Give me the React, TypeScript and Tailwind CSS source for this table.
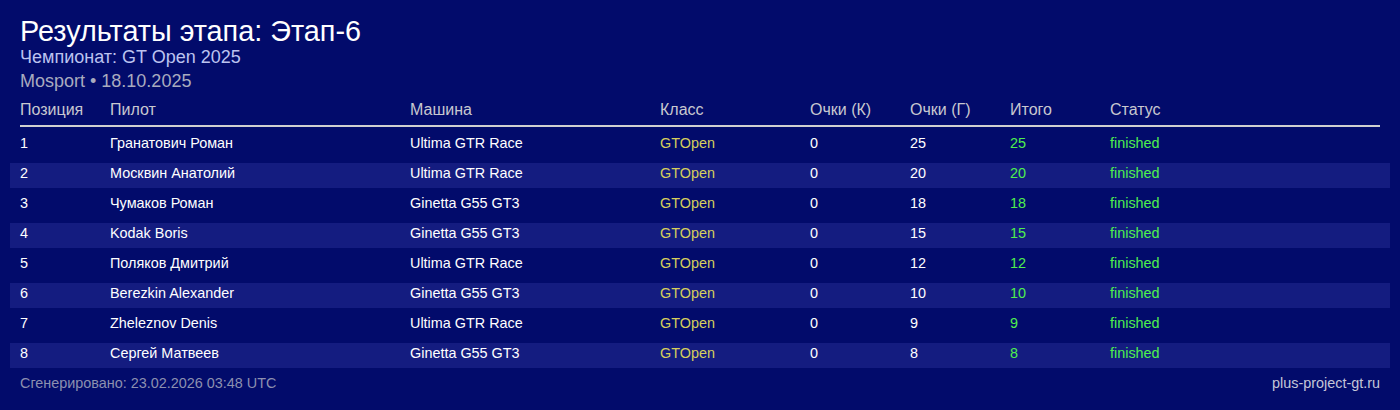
const ROWS = [
  { pos: 1, driver: 'Гранатович Роман', car: 'Ultima GTR Race', k: 0, g: 25, total: 25 },
  { pos: 2, driver: 'Москвин Анатолий', car: 'Ultima GTR Race', k: 0, g: 20, total: 20 },
  { pos: 3, driver: 'Чумаков Роман', car: 'Ginetta G55 GT3', k: 0, g: 18, total: 18 },
  { pos: 4, driver: 'Kodak Boris', car: 'Ginetta G55 GT3', k: 0, g: 15, total: 15 },
  { pos: 5, driver: 'Поляков Дмитрий', car: 'Ultima GTR Race', k: 0, g: 12, total: 12 },
  { pos: 6, driver: 'Berezkin Alexander', car: 'Ginetta G55 GT3', k: 0, g: 10, total: 10 },
  { pos: 7, driver: 'Zheleznov Denis', car: 'Ultima GTR Race', k: 0, g: 9, total: 9 },
  { pos: 8, driver: 'Сергей Матвеев', car: 'Ginetta G55 GT3', k: 0, g: 8, total: 8 },
];

// fixed column widths, last column takes the rest
const COLS = ['w-[90px]', 'w-[300px]', 'w-[250px]', 'w-[150px]', 'w-[100px]', 'w-[100px]', 'w-[100px]', 'flex-1'];
const HEADERS = ['Позиция', 'Пилот', 'Машина', 'Класс', 'Очки (К)', 'Очки (Г)', 'Итого', 'Статус'];

export default function App() {
  return (
    <div
      className="min-h-screen bg-[#020b6b] px-[10px] pt-[16px] text-white"
      style={{ fontFamily: '"Liberation Sans", Arial, sans-serif' }}
    >
      <div className="px-[10px]">
        <h1 className="text-[28.8px] leading-[30px]">Результаты этапа: Этап-6</h1>
        <div className="mt-[1px] text-[18px] leading-[20px] text-[#bcc3f0]">Чемпионат: GT Open 2025</div>
        <div className="mt-[4px] text-[18px] leading-[20px] text-[#a9abbf]">Mosport • 18.10.2025</div>
      </div>

      {/* Table header */}
      <div className="mx-[10px] mt-[9px] flex border-b-2 border-[#d0d0d0] pb-[5px] text-[16px] leading-[20px] text-[#c8c8d0]">
        {HEADERS.map((h, i) => (
          <div key={h} className={COLS[i]}>{h}</div>
        ))}
      </div>

      <div className="pt-[1px]">
        {ROWS.map((r, idx) => (
          <div
            key={r.pos}
            className={`mt-[5px] flex h-[25px] px-[10px] pt-[2px] text-[14.4px] leading-[16px] ${idx % 2 === 1 ? 'bg-[#141c80]' : ''}`}
          >
            <div className={COLS[0]}>{r.pos}</div>
            <div className={COLS[1]}>{r.driver}</div>
            <div className={COLS[2]}>{r.car}</div>
            <div className={`${COLS[3]} text-[#d6cf5c]`}>GTOpen</div>
            <div className={COLS[4]}>{r.k}</div>
            <div className={COLS[5]}>{r.g}</div>
            <div className={`${COLS[6]} text-[#4ef04e]`}>{r.total}</div>
            <div className={`${COLS[7]} text-[#4ef04e]`}>finished</div>
          </div>
        ))}
      </div>

      <div className="mt-[7px] flex justify-between px-[10px] text-[14.4px] leading-[16px]">
        <span className="text-[#8c90b0]">Сгенерировано: 23.02.2026 03:48 UTC</span>
        <span className="text-[#c4c6d8]">plus-project-gt.ru</span>
      </div>
    </div>
  );
}
